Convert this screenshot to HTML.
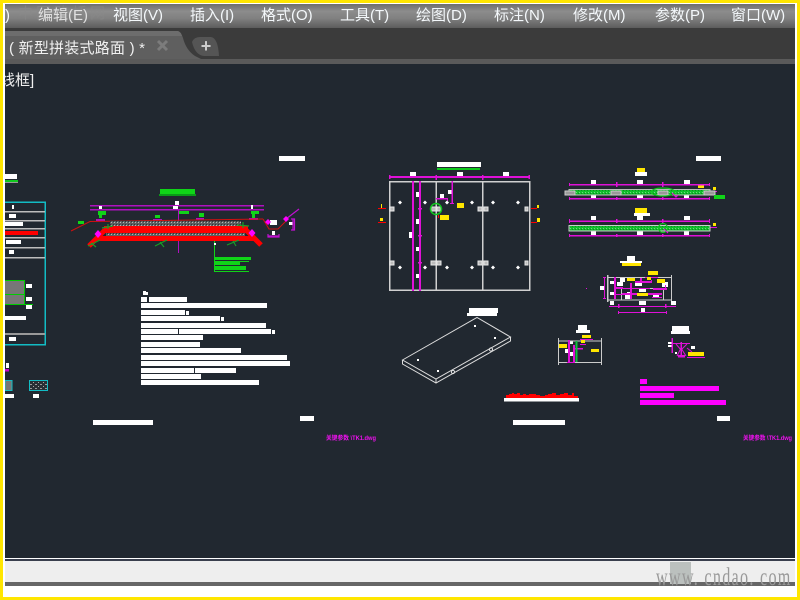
<!DOCTYPE html>
<html lang="zh"><head><meta charset="utf-8"><title>CAD</title>
<style>
html,body{margin:0;padding:0;background:#fff}
#p{position:relative;width:800px;height:600px;overflow:hidden;background:#fff;font-family:"Liberation Sans","Noto Sans CJK SC",sans-serif;color:#fff}
#p div,#p span{position:absolute}
.m{top:6px;font-size:15px;line-height:20px;white-space:nowrap;color:#f4f8fb}
svg{position:absolute;left:0;top:0}
</style></head><body><div id="p">
<div style="left:0;top:4px;width:800px;height:24px;background:linear-gradient(#6e6e6e,#8c8c8c 30%,#808080 60%,#5c5c5c)"></div>
<div style="left:0;top:28px;width:800px;height:31px;background:#3b3b3b"></div>
<div style="left:0;top:59px;width:800px;height:5px;background:#5a5a5a"></div>
<div style="left:0;top:64px;width:800px;height:494px;background:#212830"></div>
<div style="left:0;top:558px;width:800px;height:1.5px;background:#fff"></div>
<div style="left:0;top:559px;width:800px;height:2px;background:#3a3f4e"></div>
<div style="left:0;top:561px;width:800px;height:21px;background:#eee"></div>
<div style="left:0;top:582px;width:800px;height:4px;background:#666"></div>
<div style="left:670px;top:562px;width:21px;height:22px;background:#bbc0be"></div>
<div style="left:656px;top:564px;font:25px/28px 'Liberation Serif',serif;color:#999;white-space:nowrap;transform:scaleX(.645);transform-origin:0 0;letter-spacing:2px">www. cndao. com</div>

<div style="left:18px;top:2px;font-size:15px;line-height:24px;color:#8a8a8a;opacity:.55;letter-spacing:3px;white-space:nowrap">中国路桥网</div>
<span class="m" style="left:5px">)</span>
<span class="m" style="left:38px;color:#e0e0e0">编辑(E)</span>
<span class="m" style="left:113px">视图(V)</span>
<span class="m" style="left:190px">插入(I)</span>
<span class="m" style="left:261px">格式(O)</span>
<span class="m" style="left:340px">工具(T)</span>
<span class="m" style="left:416px">绘图(D)</span>
<span class="m" style="left:494px">标注(N)</span>
<span class="m" style="left:573px">修改(M)</span>
<span class="m" style="left:655px">参数(P)</span>
<span class="m" style="left:731px">窗口(W)</span>

<svg width="800" height="600" viewBox="0 0 800 600">
<defs>
<pattern id="h" width="3" height="3" patternUnits="userSpaceOnUse"><rect width="3" height="3" fill="#5d5f60"/><rect width="1" height="1" fill="#b5b5b5"/><rect x="2" y="2" width="1" height="1" fill="#2f3338"/></pattern>
<pattern id="g" width="3" height="3" patternUnits="userSpaceOnUse"><rect width="3" height="3" fill="#10c02c"/><rect width="1" height="1" fill="#6fd880"/><rect x="2" y="1" width="1" height="1" fill="#0a8a20"/></pattern>
<pattern id="s" width="5" height="4" patternUnits="userSpaceOnUse"><rect width="5" height="4" fill="#2a2f35"/><rect width="2" height="1" fill="#999"/><rect x="3" y="2" width="1" height="1" fill="#aaa"/></pattern>
</defs>
<path d="M0 59V31H178Q181 32 183 38Q186 50 195 56L201 59Z" fill="#5f5f5f"/>
<path d="M0 31H178Q181 32 182 36H0Z" fill="#6d6d6d"/>
<path d="M192 42Q194 37 200 37H211Q218 38 219 56H204Q195 55 192 42Z" fill="#555"/>
<text x="206" y="52" font-size="18" font-weight="bold" fill="#ccc" text-anchor="middle" font-family="Liberation Sans">+</text>
<path d="M158 41L167 50M167 41L158 50" stroke="#7c7c7c" stroke-width="3"/>
<text x="9" y="53" font-size="15" fill="#f0f0f0" textLength="136" font-family="Liberation Sans,Noto Sans CJK SC,sans-serif">( 新型拼装式路面 ) *</text>
<text x="0" y="85" font-size="15" fill="#f0f0f0" font-family="Liberation Sans,Noto Sans CJK SC,sans-serif">线框]</text>

<g shape-rendering="crispEdges">
<!-- left table -->
<g fill="none"><path d="M5 202H45V344.500H5" stroke="#12bcc4" stroke-width="1.500"/></g>
<g fill="#bdbdbd"><rect x="5" y="211" width="40" height="1.500"/><rect x="5" y="220" width="40" height="1.500"/><rect x="5" y="228" width="40" height="1.500"/><rect x="5" y="237" width="40" height="1.500"/><rect x="5" y="247" width="40" height="1.500"/><rect x="5" y="257" width="40" height="1.500"/><rect x="5" y="333" width="40" height="2" fill="#999"/></g>
<g fill="#fff"><rect x="279" y="156" width="26" height="5"/><rect x="5" y="174" width="12" height="5"/><rect x="12" y="205" width="2" height="4"/><rect x="9" y="214" width="7" height="4"/><rect x="5" y="222" width="18" height="4"/><rect x="6" y="240" width="15" height="4"/><rect x="9" y="250" width="5" height="4"/><rect x="26" y="284" width="6" height="4"/><rect x="26" y="297" width="6" height="4"/><rect x="26" y="305" width="6" height="4"/><rect x="5" y="316" width="21" height="4"/><rect x="9" y="337" width="7" height="4"/><rect x="6" y="363" width="3" height="5"/><rect x="5" y="394" width="9" height="4"/><rect x="33" y="394" width="6" height="4"/></g>
<rect x="5" y="180" width="13" height="2" fill="#10c81e"/><rect x="5" y="182" width="13" height="1" fill="#999"/>
<rect x="5" y="231" width="33" height="4" fill="#f00"/>
<rect x="5" y="369" width="4" height="2.500" fill="#c0c"/>
<rect x="5" y="281" width="19.500" height="23" fill="#777"/>
<path d="M5 280.500H24.500V304M5 294.500H24.500M5 304.500H33" fill="none" stroke="#0c0" stroke-width="1"/>
<rect x="5" y="380.500" width="7" height="10" fill="#777" stroke="#12bcc4"/>
<rect x="29.500" y="380.500" width="18" height="10" fill="url(#s)" stroke="#12bcc4"/>

<!-- text block -->
<g fill="#fff"><rect x="143" y="291" width="3" height="4"/><rect x="144" y="292" width="4" height="3"/><rect x="141" y="297" width="6" height="5"/><rect x="149" y="297" width="38" height="5"/><rect x="141" y="303" width="126" height="5"/><rect x="141" y="310" width="44" height="5"/><rect x="186" y="311" width="3" height="4"/><rect x="141" y="316" width="79" height="5"/><rect x="221" y="317" width="3" height="4"/><rect x="141" y="323" width="125" height="5"/><rect x="141" y="329" width="37" height="5"/><rect x="179" y="329" width="92" height="5"/><rect x="272" y="330" width="3" height="4"/><rect x="141" y="335" width="62" height="5"/><rect x="141" y="342" width="59" height="5"/><rect x="141" y="348" width="100" height="5"/><rect x="141" y="355" width="146" height="5"/><rect x="141" y="361" width="149" height="5"/><rect x="141" y="368" width="53" height="5"/><rect x="195" y="368" width="41" height="5"/><rect x="141" y="374" width="60" height="5"/><rect x="141" y="380" width="118" height="5"/><rect x="93" y="420" width="60" height="5"/><rect x="300" y="416" width="14" height="5"/></g>

<!-- road cross-section -->
<g fill="#10d418"><rect x="160" y="189" width="35" height="5"/><rect x="98" y="211" width="8" height="4"/><rect x="99" y="215" width="3" height="3"/><rect x="155" y="215" width="5" height="3"/><rect x="179" y="211" width="10" height="3"/><rect x="199" y="213" width="5" height="4"/><rect x="251" y="211" width="8" height="3"/><rect x="252" y="214" width="3" height="4"/><rect x="78" y="221" width="6" height="3"/><rect x="215" y="257" width="36" height="3"/><rect x="215" y="262" width="25" height="3"/><rect x="215" y="266" width="31" height="4"/><rect x="214" y="240" width="1" height="32"/><rect x="214" y="271" width="35" height="1"/><rect x="215" y="261" width="34" height="1"/><rect x="159" y="194" width="37" height="2" fill="#0a9a18"/></g>
<g fill="#b010c0"><rect x="90" y="205" width="174" height="1.500"/><rect x="90" y="209" width="174" height="1.500"/><rect x="178" y="210" width="1" height="43"/><rect x="96" y="219" width="9" height="2"/><rect x="153" y="219" width="9" height="2"/><rect x="196" y="218" width="8" height="2"/><rect x="249" y="218" width="9" height="2"/></g>
<g fill="#fff"><rect x="175" y="201" width="4" height="4"/><rect x="99" y="206" width="3" height="3"/><rect x="173" y="206" width="5" height="3"/><rect x="251" y="205" width="2" height="4"/><rect x="214" y="243" width="2" height="2"/><rect x="270" y="220" width="7" height="5"/><rect x="289" y="222" width="4" height="3"/><rect x="272" y="231" width="3" height="4"/></g>
</g>
<path d="M71 231L90 221.500L263 219" fill="none" stroke="#d01010" stroke-width="1"/>
<path d="M89 246L105 230M246 230L261 245" fill="none" stroke="#f00" stroke-width="5"/>
<g shape-rendering="crispEdges">
<rect x="110" y="221" width="131" height="5" fill="url(#h)"/>
<rect x="104" y="226" width="144" height="7" fill="#f00"/>
<rect x="106" y="233" width="139" height="3" fill="url(#h)"/>
<rect x="98" y="236" width="156" height="5" fill="#f00"/>
</g>
<path d="M88 246L100 240M91 243L96 247M155 246L167 240M160 242L164 247M227 245L239 240M233 241L236 246M102 228L113 226M108 224V229M237 225L249 226M243 222V228" fill="none" stroke="#1a9c28" stroke-width="1.200"/>
<path d="M263 219L269 229H278L286 221" fill="none" stroke="#d01010" stroke-width="1"/>
<path d="M286 219L299 209M268 234V237H279V234M268 236H279M291 219H294.500V230H291M293 219V230" fill="none" stroke="#c010d0" stroke-width="1.200"/>
<g fill="#f0f"><path d="M98 230L101.500 234L98 238L94.500 234Z"/><path d="M252 229L255.500 233L252 237L248.500 233Z"/><path d="M268 219L271 222L268 225L265 222Z"/><path d="M286 216L289 219L286 222L283 219Z"/></g>

<!-- plan -->
<g shape-rendering="crispEdges">
<rect x="437" y="162" width="44" height="5" fill="#fff"/><rect x="437" y="168" width="43" height="2" fill="#10c81e"/>
<g fill="#fff"><rect x="410" y="172" width="6" height="4"/><rect x="457" y="172" width="6" height="4"/><rect x="503" y="172" width="6" height="4"/><rect x="416" y="192" width="4" height="5"/><rect x="416" y="219" width="4" height="5"/><rect x="409" y="232" width="4" height="6"/><rect x="416" y="247" width="4" height="4"/><rect x="416" y="274" width="4" height="4"/><rect x="440" y="194" width="4" height="4"/><rect x="448" y="190" width="4" height="4"/></g>
<rect x="389" y="176" width="141" height="2" fill="#e010d8"/>
<g fill="#e010d8"><rect x="389" y="175" width="1.500" height="4"/><rect x="435.500" y="175" width="1.500" height="5"/><rect x="482" y="175" width="1.500" height="5"/><rect x="528.500" y="175" width="1.500" height="4"/></g>
<path d="M389.500 181.500H529.500V290H389.500ZM436 181V290M482.500 181V290" fill="none" stroke="#d0d0d0" stroke-width="1.500"/>
<g fill="#e010d8"><rect x="412" y="181" width="2" height="110"/><rect x="419" y="181" width="2" height="110"/><rect x="418" y="208" width="4" height="1.500"/><rect x="418" y="235" width="4" height="1.500"/><rect x="418" y="262" width="4" height="1.500"/><rect x="451.500" y="181" width="1.500" height="22"/><rect x="450" y="203" width="4" height="1"/><rect x="436" y="198" width="12" height="1.500"/><rect x="447" y="198" width="1" height="3"/></g>
<g fill="#bbb" stroke="#e8e8e8" stroke-width="1"><rect x="390" y="207" width="4" height="4"/><rect x="431" y="207" width="5" height="4"/><rect x="437" y="207" width="4" height="4"/><rect x="478" y="207" width="4" height="4"/><rect x="484" y="207" width="4" height="4"/><rect x="525" y="207" width="3" height="4"/><rect x="390" y="261" width="4" height="4"/><rect x="431" y="261" width="5" height="4"/><rect x="437" y="261" width="4" height="4"/><rect x="478" y="261" width="4" height="4"/><rect x="484" y="261" width="4" height="4"/><rect x="525" y="261" width="3" height="4"/></g>
<g fill="#ffe600"><rect x="457" y="203" width="7" height="5"/><rect x="440" y="215" width="9" height="5"/><rect x="381" y="204" width="1" height="4"/><rect x="380" y="218" width="3" height="3"/><rect x="537" y="205" width="2" height="3"/><rect x="537" y="218" width="3" height="4"/></g>
<g fill="#f00"><rect x="378" y="208" width="8" height="1"/><rect x="378" y="222" width="8" height="1"/><rect x="531" y="208" width="6" height="1"/><rect x="531" y="222" width="6" height="1"/><rect x="438" y="215" width="1" height="3"/></g>
</g>
<circle cx="436" cy="209" r="5.500" fill="none" stroke="#10c81e" stroke-width="1.500"/>
<g fill="#fff"><path d="M400 200.500l2 2-2 2-2-2zM425 200.500l2 2-2 2-2-2zM447 200.500l2 2-2 2-2-2zM472 200.500l2 2-2 2-2-2zM493 200.500l2 2-2 2-2-2zM518 200.500l2 2-2 2-2-2zM400 265.500l2 2-2 2-2-2zM425 265.500l2 2-2 2-2-2zM447 265.500l2 2-2 2-2-2zM472 265.500l2 2-2 2-2-2zM493 265.500l2 2-2 2-2-2zM518 265.500l2 2-2 2-2-2z"/></g>

<!-- side strips -->
<g shape-rendering="crispEdges">
<g fill="#fff"><rect x="696" y="156" width="25" height="5"/><rect x="635" y="172" width="12" height="4"/><rect x="591" y="180" width="5" height="4"/><rect x="637" y="180" width="6" height="4"/><rect x="684" y="180" width="6" height="4"/><rect x="591" y="194" width="5" height="4"/><rect x="637" y="194" width="6" height="4"/><rect x="684" y="194" width="5" height="4"/><rect x="634" y="213" width="16" height="3"/><rect x="591" y="216" width="5" height="4"/><rect x="637" y="216" width="6" height="4"/><rect x="684" y="216" width="6" height="4"/><rect x="591" y="231" width="5" height="4"/><rect x="637" y="231" width="6" height="4"/><rect x="684" y="231" width="5" height="4"/></g>
<g fill="#ffe600"><rect x="637" y="168" width="8" height="4"/><rect x="698" y="185" width="6" height="3"/><rect x="713" y="187" width="3" height="3"/><rect x="635" y="208" width="12" height="5"/><rect x="713" y="223" width="3" height="3"/></g>
<g fill="#e010d8"><rect x="569" y="184" width="141" height="1.500"/><rect x="569" y="198" width="141" height="1.500"/><rect x="569" y="220.500" width="141" height="1.500"/><rect x="569" y="235" width="141" height="1.500"/><rect x="709" y="191" width="8" height="1"/><rect x="709" y="227" width="8" height="1"/><rect x="569" y="183" width="1" height="3"/><rect x="616" y="182" width="1.500" height="5"/><rect x="662" y="182" width="1.500" height="5"/><rect x="709" y="183" width="1" height="3"/><rect x="569" y="197" width="1" height="3"/><rect x="616" y="197" width="1.500" height="3"/><rect x="662" y="197" width="1.500" height="3"/><rect x="709" y="197" width="1" height="3"/><rect x="569" y="219" width="1" height="4"/><rect x="616" y="219" width="1.500" height="4"/><rect x="662" y="219" width="1.500" height="4"/><rect x="709" y="219" width="1" height="4"/><rect x="569" y="234" width="1" height="3"/><rect x="616" y="234" width="1.500" height="3"/><rect x="662" y="234" width="1.500" height="3"/><rect x="709" y="234" width="1" height="3"/></g>
<rect x="569" y="189.500" width="141" height="5.500" fill="url(#g)" stroke="#bbb" stroke-width=".6"/>
<rect x="569" y="225.500" width="141" height="5.500" fill="url(#g)" stroke="#ccc" stroke-width=".8"/>
<g fill="#999" stroke="#ccc" stroke-width=".8"><rect x="565" y="191" width="10" height="4"/><rect x="611" y="191" width="10" height="4"/><rect x="658" y="191" width="10" height="4"/><rect x="704" y="191" width="11" height="4"/></g>
<rect x="714" y="195" width="11" height="4" fill="#10d418"/>
</g>
<ellipse cx="663" cy="192" rx="12" ry="4" fill="none" stroke="#10c81e" stroke-width="1.200"/>
<circle cx="663" cy="228" r="4.500" fill="none" stroke="#10c81e" stroke-width="1.200"/>
<path d="M672 193L676 197L678 195M664 229L668 233" fill="none" stroke="#e010d8" stroke-width="1.200"/>

<!-- detail -->
<g shape-rendering="crispEdges">
<g fill="#fff"><rect x="627" y="256" width="8" height="5"/><rect x="620" y="261" width="22" height="2"/><rect x="600" y="286" width="4" height="4"/><rect x="610" y="281" width="4" height="3"/><rect x="617" y="282" width="6" height="4"/><rect x="620" y="278" width="5" height="4"/><rect x="610" y="292" width="4" height="3"/><rect x="610" y="301" width="4" height="4"/><rect x="625" y="294" width="5" height="5"/><rect x="627" y="292" width="3" height="3"/><rect x="639" y="288" width="7" height="4"/><rect x="635" y="283" width="7" height="3"/><rect x="653" y="293" width="6" height="4"/><rect x="662" y="282" width="6" height="5"/><rect x="639" y="301" width="7" height="4"/><rect x="671" y="301" width="5" height="4"/><rect x="641" y="308" width="4" height="4"/></g>
<g fill="#ccc"><rect x="607" y="275" width="1.500" height="27"/><rect x="671" y="275" width="1" height="26"/><rect x="607" y="277" width="65" height="1"/><rect x="607" y="299.500" width="65" height="1"/><rect x="621" y="288" width="1" height="12"/><rect x="663" y="288" width="1" height="12"/><rect x="621" y="288" width="42" height="1"/></g>
<g fill="#e010d8"><rect x="604" y="277" width="1.200" height="22"/><rect x="603" y="277" width="3" height="1"/><rect x="603" y="298" width="3" height="1"/><rect x="614" y="277" width="2" height="22"/><rect x="630" y="283" width="2" height="16"/><rect x="615" y="294" width="8" height="1"/><rect x="622" y="293" width="40" height="2"/><rect x="635" y="281" width="17" height="2"/><rect x="640" y="278" width="2" height="5"/><rect x="645" y="277" width="13" height="1"/><rect x="651" y="280" width="1" height="3"/><rect x="615" y="287" width="8" height="2"/><rect x="620" y="288" width="30" height="1"/><rect x="653" y="288" width="14" height="2"/><rect x="665" y="285" width="1" height="4"/><rect x="652" y="297" width="10" height="1"/><rect x="609" y="306" width="67" height="1"/><rect x="618" y="312" width="49" height="1"/><rect x="618" y="311" width="1" height="3"/><rect x="666" y="311" width="1" height="3"/><rect x="618" y="304" width="1.500" height="4"/><rect x="665" y="304" width="1.500" height="4"/><rect x="586" y="288" width="1" height="1"/></g>
<g fill="#ffe600"><rect x="622" y="263" width="19" height="3"/><rect x="648" y="271" width="10" height="4"/><rect x="627" y="278" width="8" height="3"/><rect x="637" y="293" width="11" height="3"/><rect x="647" y="277" width="4" height="3"/><rect x="657" y="279" width="8" height="4"/></g>
</g>

<!-- slab -->
<g fill="none" stroke="#dedede" stroke-width="1">
<path d="M402.500 360L477 317.500L510.500 337L436 379Z"/>
<path d="M402.500 360V364L436 383L510.500 341V337M436 379V383"/>
<circle cx="453" cy="372" r="1.600"/><circle cx="491" cy="349.500" r="1.600"/>
</g>
<g fill="#fff" shape-rendering="crispEdges">
<rect x="474" y="325" width="2" height="2"/><rect x="494" y="337" width="2" height="2"/><rect x="417" y="359" width="2" height="2"/><rect x="437" y="370" width="2" height="2"/>
<rect x="469" y="308" width="29" height="5"/><rect x="467" y="313" width="30" height="3"/>
<rect x="504" y="398" width="75" height="3.500"/>
<rect x="513" y="420" width="52" height="5"/>
<rect x="578" y="325" width="9" height="5"/><rect x="576" y="330" width="14" height="3"/>
<rect x="565" y="349" width="4" height="4"/><rect x="569" y="352" width="4" height="4"/><rect x="569" y="341" width="4" height="3"/>
<rect x="672" y="326" width="17" height="5"/><rect x="671" y="331" width="19" height="3"/>
<rect x="668" y="342" width="4" height="2"/><rect x="668" y="345" width="4" height="2"/><rect x="691" y="346" width="4" height="3"/><rect x="675" y="352" width="2" height="2"/>
<rect x="717" y="416" width="13" height="5"/>
</g>
<path d="M506 398V395H509V394H512V393H514V394H517V393H520V395H523V394H526V395H529V394H533V394H536V395H540V396H545V395H548V394H552V393H556V395H560V394H564V393H568V395H572V393H574V396H578V398Z" fill="#f00"/>
<g shape-rendering="crispEdges">
<g fill="#ccc"><rect x="558" y="338" width="1" height="27"/><rect x="601" y="338" width="1" height="27"/><rect x="558" y="340.500" width="44" height="1.200"/><rect x="558" y="362" width="44" height="1.200"/></g>
<g fill="#ffe600"><rect x="582" y="335" width="9" height="3"/><rect x="559" y="344" width="8" height="4"/><rect x="591" y="349" width="8" height="3"/><rect x="581" y="340" width="4" height="3"/></g>
<g fill="#e010d8"><rect x="568" y="340" width="2" height="23"/><rect x="573" y="345" width="2" height="18"/><rect x="573" y="348" width="10" height="1.500"/><rect x="580" y="339" width="13" height="1"/><rect x="580" y="344" width="6" height="1"/><rect x="567" y="362" width="8" height="1"/></g>
<rect x="575.500" y="341" width="2" height="21" fill="#10c040"/>
<g fill="#e010d8"><rect x="671.500" y="338" width="1.500" height="15"/><rect x="680.500" y="342" width="1.500" height="15"/><rect x="673" y="343" width="17" height="1.200"/><rect x="678" y="355" width="7" height="2.500"/><rect x="687" y="357" width="18" height="1"/><rect x="640" y="379" width="7" height="5" fill="#f0f"/><rect x="640" y="386" width="79" height="5" fill="#f0f"/><rect x="640" y="393" width="34" height="5" fill="#f0f"/><rect x="640" y="400" width="86" height="5" fill="#f0f"/></g>
<rect x="688" y="352" width="16" height="4" fill="#ffe600"/>
</g>
<path d="M676 344L681 350L687 344M677 356L681 348L686 356M687 348L692 352" fill="none" stroke="#e010d8" stroke-width="1"/>
<g fill="#f010f0" font-size="6" font-weight="bold" font-family="Liberation Sans,Noto Sans CJK SC,sans-serif">
<text x="326" y="440" textLength="50" lengthAdjust="spacingAndGlyphs">关键参数 \TK1.dwg</text>
<text x="743" y="440" textLength="49" lengthAdjust="spacingAndGlyphs">关键参数 \TK1.dwg</text>
</g>
</svg>

<div style="left:3px;top:3px;width:2px;height:594px;background:#fff"></div>
<div style="left:795px;top:3px;width:2px;height:594px;background:#fff"></div>
<div style="left:0;top:3px;width:800px;height:1px;background:#fff"></div>
<div style="left:0;top:0;width:800px;height:3px;background:#ffe600"></div>
<div style="left:0;top:597px;width:800px;height:3px;background:#ffe600"></div>
<div style="left:0;top:0;width:3px;height:600px;background:#ffe600"></div>
<div style="left:797px;top:0;width:3px;height:600px;background:#ffe600"></div>
</div></body></html>
